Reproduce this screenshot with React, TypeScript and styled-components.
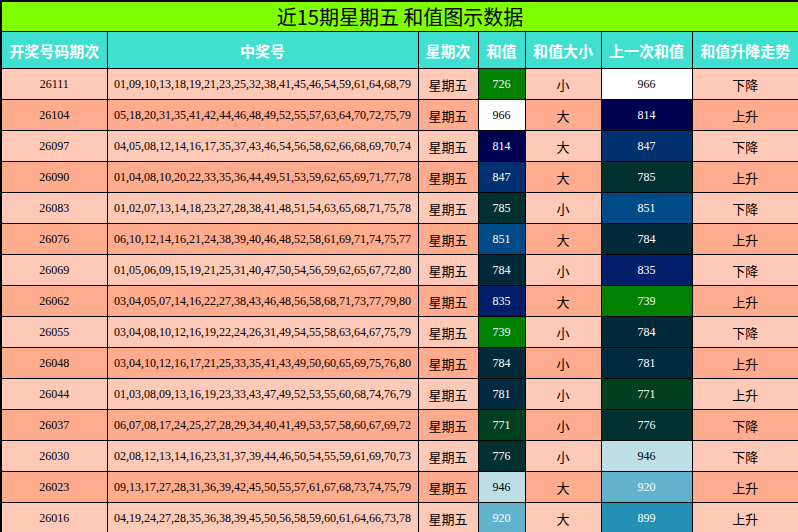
import React from "react"
import styled, {createGlobalStyle} from "styled-components"

const Global = createGlobalStyle`
  body { margin: 0; background: #fff; font-family: "Liberation Serif", "Noto Sans CJK SC", serif; }
`

const Table = styled.table`
  width: 798px;
  border-collapse: collapse;
  table-layout: fixed;
  border: 2px solid #000;
`

const Title = styled.th`
  background: #7fff00;
  height: 27px;
  font: 20px "Noto Sans CJK SC", sans-serif;
  font-weight: normal;
  color: #000;
  border: 1px solid #000;
  padding: 0;
`

const Head = styled.th`
  background: #40e0d0;
  color: #fff;
  height: 36px;
  font: bold 15px "Noto Sans CJK SC", sans-serif;
  border: 1px solid #000;
  padding: 0;
`

const Cell = styled.td<{$bg: string; $fg?: string}>`
  background: ${p => p.$bg};
  color: ${p => p.$fg || "#000"};
  height: 30px;
  text-align: center;
  font-size: 12px;
  border: 1px solid #000;
  padding: 0;
  white-space: nowrap;
`

const Cn = styled(Cell)`
  font-family: "Noto Sans CJK SC", sans-serif;
  font-size: 13px;
`

const rows: [string, string, number, string, number, string][] = [
  ["26111", "01,09,10,13,18,19,21,23,25,32,38,41,45,46,54,59,61,64,68,79", 726, "小", 966, "下降"],
  ["26104", "05,18,20,31,35,41,42,44,46,48,49,52,55,57,63,64,70,72,75,79", 966, "大", 814, "上升"],
  ["26097", "04,05,08,12,14,16,17,35,37,43,46,54,56,58,62,66,68,69,70,74", 814, "大", 847, "下降"],
  ["26090", "01,04,08,10,20,22,33,35,36,44,49,51,53,59,62,65,69,71,77,78", 847, "大", 785, "上升"],
  ["26083", "01,02,07,13,14,18,23,27,28,38,41,48,51,54,63,65,68,71,75,78", 785, "小", 851, "下降"],
  ["26076", "06,10,12,14,16,21,24,38,39,40,46,48,52,58,61,69,71,74,75,77", 851, "大", 784, "上升"],
  ["26069", "01,05,06,09,15,19,21,25,31,40,47,50,54,56,59,62,65,67,72,80", 784, "小", 835, "下降"],
  ["26062", "03,04,05,07,14,16,22,27,38,43,46,48,56,58,68,71,73,77,79,80", 835, "大", 739, "上升"],
  ["26055", "03,04,08,10,12,16,19,22,24,26,31,49,54,55,58,63,64,67,75,79", 739, "小", 784, "下降"],
  ["26048", "03,04,10,12,16,17,21,25,33,35,41,43,49,50,60,65,69,75,76,80", 784, "小", 781, "上升"],
  ["26044", "01,03,08,09,13,16,19,23,33,43,47,49,52,53,55,60,68,74,76,79", 781, "小", 771, "上升"],
  ["26037", "06,07,08,17,24,25,27,28,29,34,40,41,49,53,57,58,60,67,69,72", 771, "小", 776, "下降"],
  ["26030", "02,08,12,13,14,16,23,31,37,39,44,46,50,54,55,59,61,69,70,73", 776, "小", 946, "下降"],
  ["26023", "09,13,17,27,28,31,36,39,42,45,50,55,57,61,67,68,73,74,75,79", 946, "大", 920, "上升"],
  ["26016", "04,19,24,27,28,35,36,38,39,45,50,56,58,59,60,61,64,66,73,78", 920, "大", 899, "上升"],
]

const palette: Record<number, [string, string]> = {
  726: ["#008000", "#fff"],
  966: ["#ffffff", "#000"],
  814: ["#000050", "#fff"],
  847: ["#003070", "#fff"],
  785: ["#003030", "#fff"],
  851: ["#004a88", "#fff"],
  784: ["#002a3a", "#fff"],
  835: ["#001e6a", "#fff"],
  739: ["#008000", "#fff"],
  781: ["#002a40", "#fff"],
  771: ["#004020", "#fff"],
  776: ["#003030", "#fff"],
  946: ["#bfdfe8", "#000"],
  920: ["#62b2cc", "#fff"],
  899: ["#2390b4", "#fff"],
}

const widths = [106, 311, 60, 47, 76, 91, 107]
const heads = ["开奖号码期次", "中奖号", "星期次", "和值", "和值大小", "上一次和值", "和值升降走势"]

export default function App() {
  return (
    <>
      <Global />
      <Table>
        <colgroup>
          {widths.map((w, i) => <col key={i} style={{width: w}} />)}
        </colgroup>
        <tbody>
          <tr><Title colSpan={7}>近15期星期五 和值图示数据</Title></tr>
          <tr>{heads.map(h => <Head key={h}>{h}</Head>)}</tr>
          {rows.map((r, i) => {
            const bg = i % 2 === 0 ? "#ffc9b7" : "#ffab8e"
            const [sb, sf] = palette[r[2]]
            const [pb, pf] = palette[r[4]]
            return (
              <tr key={r[0]}>
                <Cell $bg={bg}>{r[0]}</Cell>
                <Cell $bg={bg}>{r[1]}</Cell>
                <Cn $bg={bg}>星期五</Cn>
                <Cell $bg={sb} $fg={sf}>{r[2]}</Cell>
                <Cn $bg={bg}>{r[3]}</Cn>
                <Cell $bg={pb} $fg={pf}>{r[4]}</Cell>
                <Cn $bg={bg}>{r[5]}</Cn>
              </tr>
            )
          })}
        </tbody>
      </Table>
    </>
  )
}
